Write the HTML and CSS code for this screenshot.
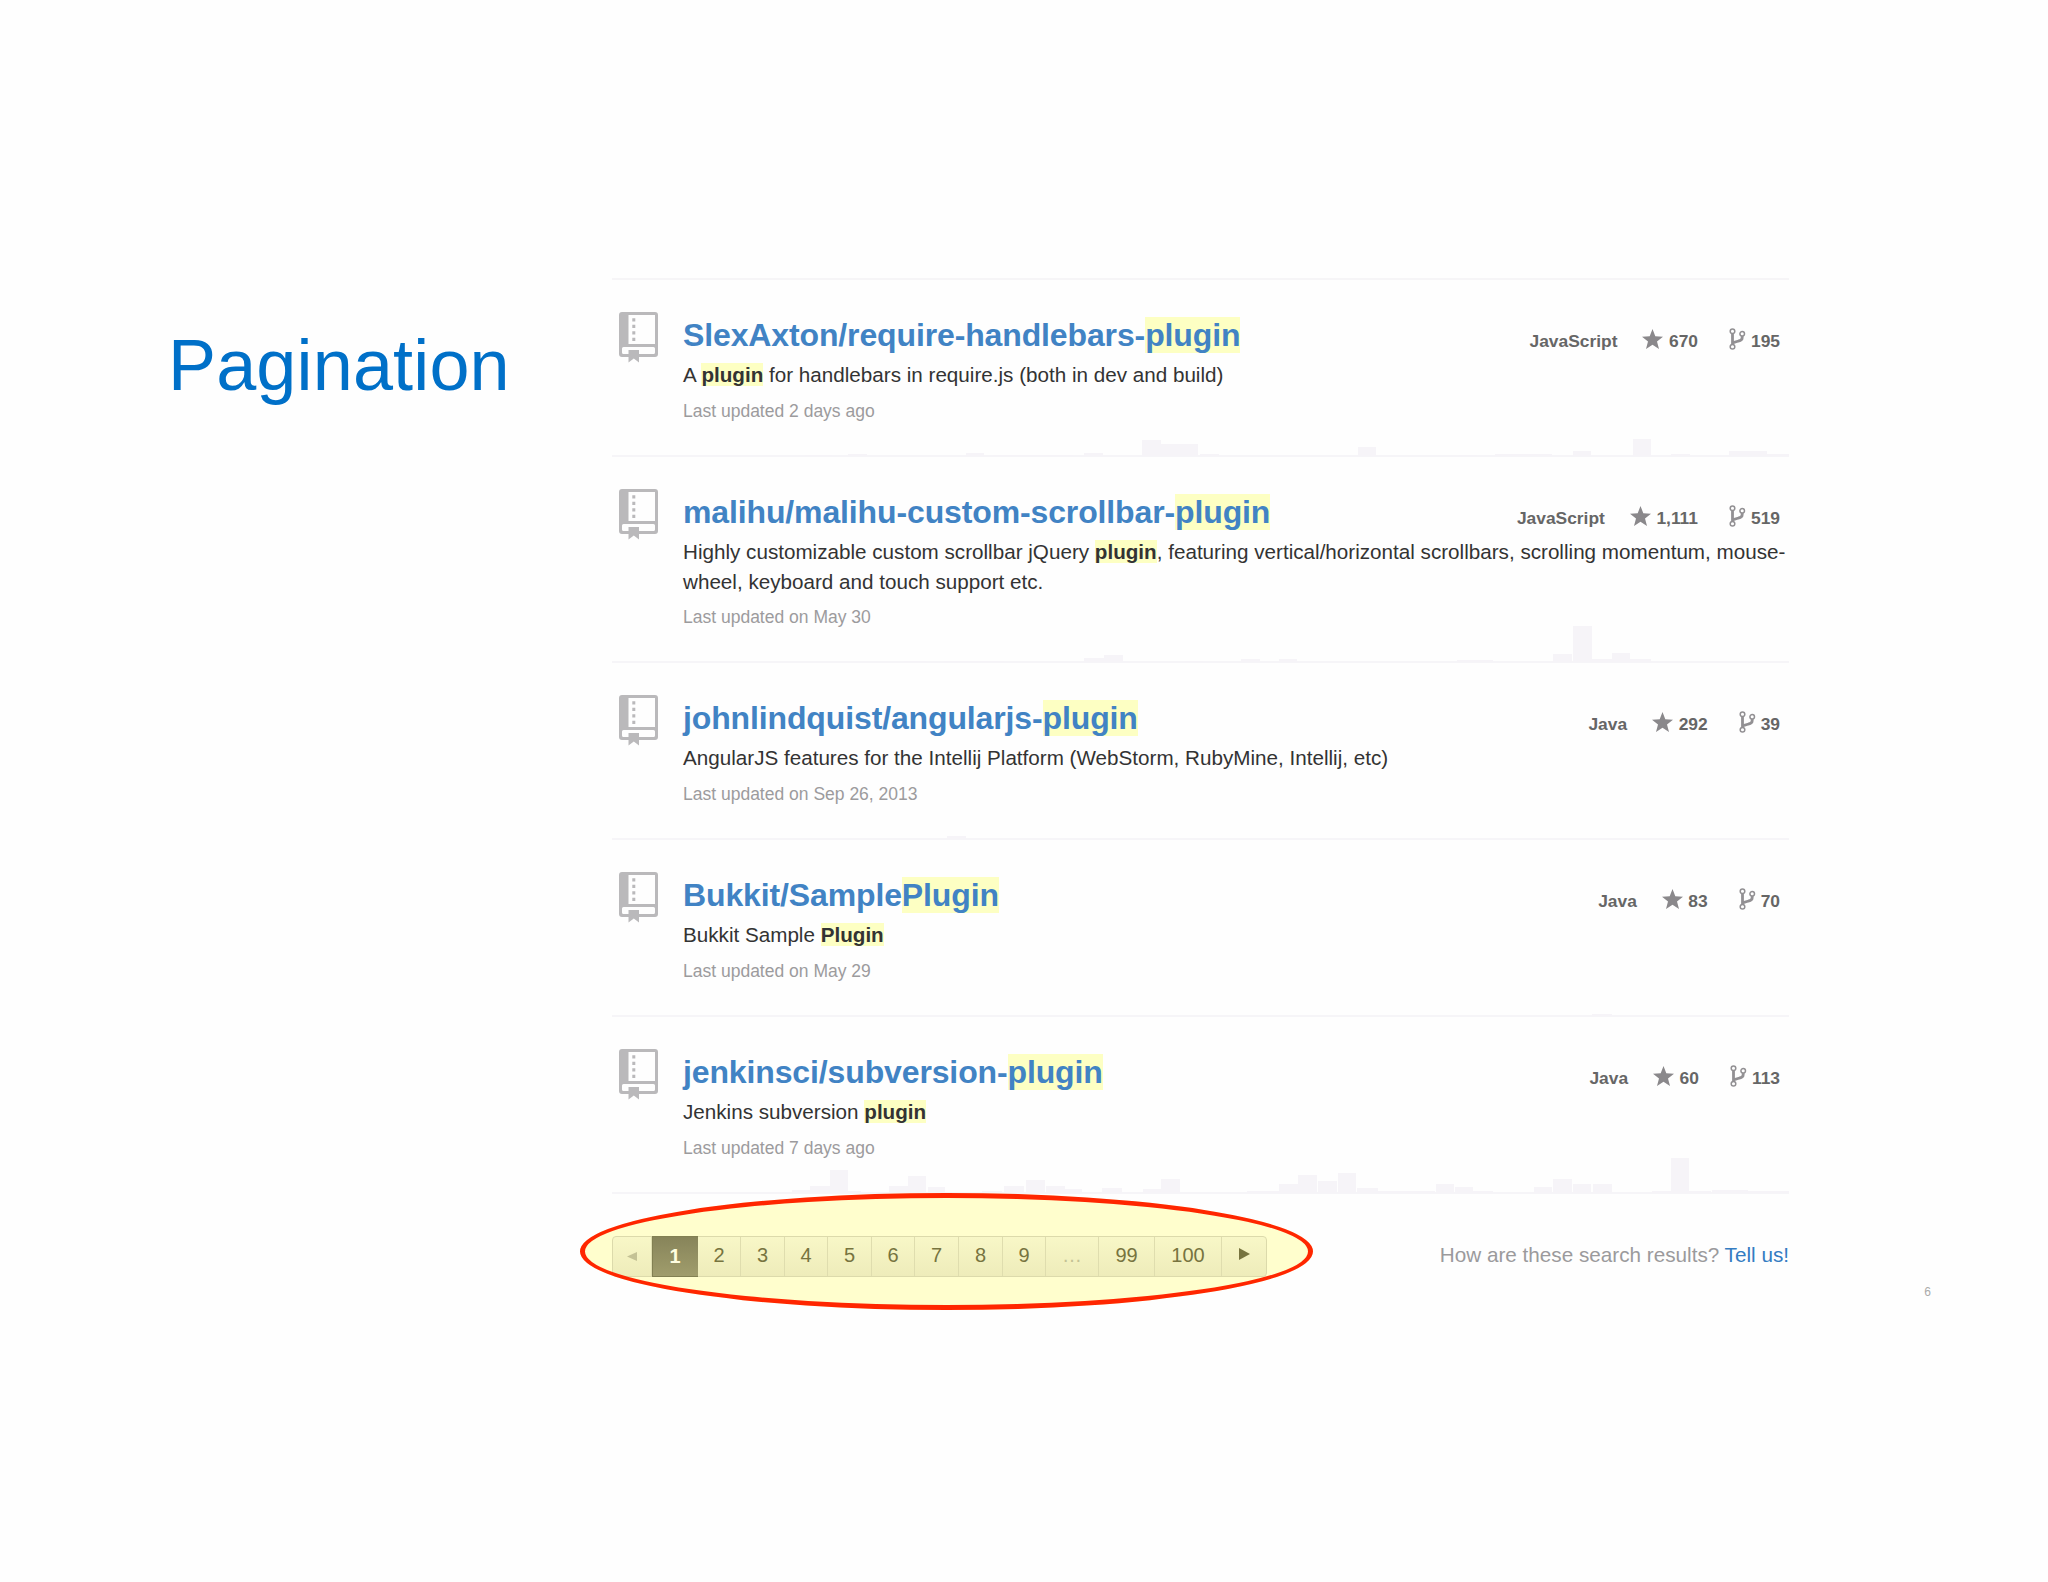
FILE: index.html
```html
<!DOCTYPE html>
<html lang="en">
<head>
<meta charset="utf-8">
<title>Pagination</title>
<link rel="stylesheet" href="styles.css">
</head>
<body>
<svg class="defs" aria-hidden="true">
  <symbol id="repo" viewBox="0 0 39 51">
    <path fill-rule="evenodd" d="M3 0H36Q39 0 39 3V42Q39 45 36 45H3Q0 45 0 42V3Q0 0 3 0ZM9.500 3V32H36V3ZM4.500 35Q3 35 3 36.500V40.500Q3 42 4.500 42H34.500Q36 42 36 40.500V36.500Q36 35 34.500 35Z"/>
    <path d="M9.500 38H20V50.500L14.800 46.500L9.500 50.500ZM13.300 6.300h3v3.300h-3zM13.300 12.800h3v3.300h-3zM13.300 19.300h3v3.300h-3zM13.300 25.800h3v3.300h-3z"/>
  </symbol>
  <symbol id="star" viewBox="0 0 21 20">
    <path d="M10.500 0L13.300 7.200L21 7.700L15 12.500L17 20L10.500 15.800L4 20L6 12.500L0 7.700L7.700 7.200Z"/>
  </symbol>
  <symbol id="fork" viewBox="0 0 17 22">
    <g fill="none" stroke="currentColor">
      <circle cx="3.500" cy="3.200" r="2.300" stroke-width="1.500"/>
      <circle cx="3.500" cy="18.800" r="2.300" stroke-width="1.500"/>
      <circle cx="13.200" cy="5.800" r="2.300" stroke-width="1.500"/>
      <path d="M3.500 5.500V16.500M13.200 8V9.500Q13.200 12.500 9.500 13L3.500 14.800" stroke-width="2.800"/>
    </g>
  </symbol>
</svg>

<main class="slide">
  <h1 class="slide-title">Pagination</h1>

  <section class="content">
    <ul class="results">
      <li class="result">
        <svg class="repo-icon"><use href="#repo"/></svg>
        <div class="body">
          <div class="head">
            <h2><a>SlexAxton/require-handlebars-<em>plugin</em></a></h2>
            <div class="stats"><span class="lang">JavaScript</span><span class="stars"><svg class="star"><use href="#star"/></svg>670</span><span class="forks"><svg class="fork"><use href="#fork"/></svg>195</span></div>
          </div>
          <p class="desc">A <em>plugin</em> for handlebars in require.js (both in dev and build)</p>
          <p class="meta">Last updated 2 days ago</p>
        </div>
        <svg class="activity" viewBox="0 0 1177 40"><path d="M193 40v-1h27v1zM236 40v-2h19v2zM354 40v-3h18v3zM381 40v-1h80v1zM472 40v-3h19v3zM530 40v-16h19v16zM549 40v-12h37v12zM588 40v-2h19v2zM746 40v-9h18v9zM847 40v-1h18v1zM883 40v-2h57v2zM961 40v-5h18v5zM1021 40v-17h18v17zM1059 40v-2h19v2zM1117 40v-5h38v5zM1155 40v-2h22v2z"/></svg>
      </li>
      <li class="result">
        <svg class="repo-icon"><use href="#repo"/></svg>
        <div class="body">
          <div class="head">
            <h2><a>malihu/malihu-custom-scrollbar-<em>plugin</em></a></h2>
            <div class="stats"><span class="lang">JavaScript</span><span class="stars"><svg class="star"><use href="#star"/></svg>1,111</span><span class="forks"><svg class="fork"><use href="#fork"/></svg>519</span></div>
          </div>
          <p class="desc">Highly customizable custom scrollbar jQuery <em>plugin</em>, featuring vertical/horizontal scrollbars, scrolling momentum, mouse-<br>wheel, keyboard and touch support etc.</p>
          <p class="meta">Last updated on May 30</p>
        </div>
        <svg class="activity" viewBox="0 0 1177 40"><path d="M292 40v-1h22v1zM332 40v-1h60v1zM472 40v-4h20v4zM492 40v-7h19v7zM573 40v-1h18v1zM629 40v-3h19v3zM667 40v-3h18v3zM845 40v-2h36v2zM941 40v-8h19v8zM961 40v-36h19v36zM980 40v-3h20v3zM1000 40v-9h18v9zM1018 40v-3h21v3z"/></svg>
      </li>
      <li class="result">
        <svg class="repo-icon"><use href="#repo"/></svg>
        <div class="body">
          <div class="head">
            <h2><a>johnlindquist/angularjs-<em>plugin</em></a></h2>
            <div class="stats"><span class="lang">Java</span><span class="stars"><svg class="star"><use href="#star"/></svg>292</span><span class="forks"><svg class="fork"><use href="#fork"/></svg>39</span></div>
          </div>
          <p class="desc">AngularJS features for the Intellij Platform (WebStorm, RubyMine, Intellij, etc)</p>
          <p class="meta">Last updated on Sep 26, 2013</p>
        </div>
        <svg class="activity" viewBox="0 0 1177 40"><path d="M335 40v-3h19v3z"/></svg>
      </li>
      <li class="result">
        <svg class="repo-icon"><use href="#repo"/></svg>
        <div class="body">
          <div class="head">
            <h2><a>Bukkit/Sample<em>Plugin</em></a></h2>
            <div class="stats"><span class="lang">Java</span><span class="stars"><svg class="star"><use href="#star"/></svg>83</span><span class="forks"><svg class="fork"><use href="#fork"/></svg>70</span></div>
          </div>
          <p class="desc">Bukkit Sample <em>Plugin</em></p>
          <p class="meta">Last updated on May 29</p>
        </div>
        <svg class="activity" viewBox="0 0 1177 40"><path d="M980 40v-2h20v2z"/></svg>
      </li>
      <li class="result">
        <svg class="repo-icon"><use href="#repo"/></svg>
        <div class="body">
          <div class="head">
            <h2><a>jenkinsci/subversion-<em>plugin</em></a></h2>
            <div class="stats"><span class="lang">Java</span><span class="stars"><svg class="star"><use href="#star"/></svg>60</span><span class="forks"><svg class="fork"><use href="#fork"/></svg>113</span></div>
          </div>
          <p class="desc">Jenkins subversion <em>plugin</em></p>
          <p class="meta">Last updated 7 days ago</p>
        </div>
        <svg class="activity" viewBox="0 0 1177 40"><path d="M180 40v-3h18v3zM198 40v-7h20v7zM218 40v-23h18v23zM236 40v-2h13v2zM277 40v-7h19v7zM296 40v-17h18v17zM316 40v-6h17v6zM370 40v-2h20v2zM392 40v-7h20v7zM414 40v-13h19v13zM434 40v-7h19v7zM453 40v-4h17v4zM490 40v-5h20v5zM531 40v-4h18v4zM549 40v-14h19v14zM635 40v-2h32v2zM667 40v-9h19v9zM686 40v-18h19v18zM706 40v-12h19v12zM726 40v-20h18v20zM745 40v-5h21v5zM766 40v-2h57v2zM824 40v-9h18v9zM843 40v-6h18v6zM861 40v-2h20v2zM922 40v-6h18v6zM941 40v-14h19v14zM961 40v-9h18v9zM981 40v-9h19v9zM1040 40v-2h19v2zM1059 40v-35h18v35zM1077 40v-2h22v2zM1100 40v-3h36v3zM1136 40v-2h41v2z"/></svg>
      </li>
    </ul>

    <footer class="footer">
      <div class="highlight fill"></div>
      <nav class="pagination">
        <span class="disabled"><svg class="arrow prev" viewBox="0 0 10 9"><path d="M10 0V9L0 4.500Z"/></svg></span>
        <span class="current">1</span>
        <a>2</a><a>3</a><a>4</a><a>5</a><a>6</a><a>7</a><a>8</a><a>9</a>
        <span class="disabled gap">…</span>
        <a>99</a><a>100</a>
        <a><svg class="arrow next" viewBox="0 0 11 12"><path d="M0 0V12L11 6Z"/></svg></a>
      </nav>
      <div class="highlight ring"></div>
      <p class="feedback">How are these search results? <a>Tell us!</a></p>
    </footer>
  </section>

  <span class="page-number">6</span>
</main>
</body>
</html>
```
FILE: styles.css
```css
* { box-sizing: border-box; }
body {
  margin: 0;
  background: #fefefe;
  font-family: "Liberation Sans", Arial, sans-serif;
  color: #333;
}
h1, h2, p, ul { margin: 0; padding: 0; font-weight: normal; list-style: none; }
.defs { display: none; }

.slide {
  display: grid;
  grid-template-columns: 444px 1177px auto;
  align-items: start;
  width: 2048px;
  height: 1582px;
  padding: 278px 0 0 168px;
}
.slide-title {
  margin-top: 47px;
  font-size: 72px;
  line-height: 80px;
  letter-spacing: 0.15px;
  color: #0070c8;
}

.results { border-top: 2px solid #f6f5f7; }
.result {
  position: relative;
  display: flex;
  min-height: 177px;
  padding: 32px 0 34px 7px;
  border-bottom: 2px solid #f6f5f8;
}
.repo-icon { flex: none; width: 39px; height: 51px; fill: #bab9bb; }
.body { flex: 1; margin-left: 25px; padding-top: 3px; }
.head { display: flex; justify-content: space-between; height: 40px; }
h2 {
  font-size: 32px;
  line-height: 40px;
  letter-spacing: -0.13px;
  font-weight: bold;
  color: #4183c4;
  white-space: nowrap;
}
em { font-style: normal; font-weight: bold; background: #fdffc3; }
.stats {
  display: flex;
  padding: 6px 9px 0 0;
  font-size: 17.4px;
  line-height: 40px;
  font-weight: bold;
  color: #666;
}
.stars, .forks { display: flex; }
.stars { margin-left: 25px; }
.forks { margin-left: 31px; }
.star { width: 21px; height: 20px; margin: 8px 5.500px 0 0; fill: #8a888b; }
.fork { width: 17px; height: 22px; margin: 7px 5px 0 0; color: #929093; }
.desc { margin-top: 5.400px; font-size: 20.65px; line-height: 29.33px; white-space: nowrap; }
.meta { margin-top: 11px; font-size: 17.500px; line-height: 20px; color: #9c9b9d; }
.activity {
  position: absolute;
  left: 0;
  bottom: -1px;
  width: 1177px;
  height: 40px;
  fill: #f6f4f8;
}

.footer {
  position: relative;
  display: flex;
  justify-content: space-between;
  align-items: flex-start;
  padding-top: 42px;
}
.highlight { position: absolute; left: -32px; top: -1px; width: 733px; height: 117px; border-radius: 50%; }
.fill { background: #fffecd; }
.ring { border: 5px solid #ff2600; z-index: 2; }
.pagination {
  position: relative;
  display: grid;
  grid-template-columns: 39px 46px 43px 44px 43px 44px 43px 44px 44px 43px 53px 56px 67px 44px;
  height: 41px;
  border: 1px solid #dcdaab;
  border-radius: 4px;
  background: linear-gradient(#f8f7c7, #eeecba);
  font-size: 20px;
  line-height: 37px;
  color: #77743f;
  width: 655px;
  text-align: center;
}
.pagination > * { border-right: 1px solid #dfddae; }
.pagination > :last-child { border-right: 0; }
.pagination > .current {
  margin: -1px 0;
  padding: 1px 1px 0 0;
  background: linear-gradient(#87845a, #a09d6c);
  border: 1px solid #828052;
  border-width: 1px 0 1px 1px;
  line-height: 36px;
  font-weight: bold;
  color: #fffee0;
}
.pagination > .disabled { color: #c4c295; }
.arrow { display: inline-block; fill: currentColor; }
.prev { width: 10px; height: 9px; vertical-align: 1px; }
.next { width: 11px; height: 12px; vertical-align: 2px; }
.feedback { margin-top: 4px; font-size: 20.700px; line-height: 30px; color: #9b9a9c; white-space: nowrap; }
.feedback a { color: #347cc2; }
.page-number { justify-self: end; margin: 1007px 117px 0 0; font-size: 12px; line-height: 14px; color: #aaa; }
```
